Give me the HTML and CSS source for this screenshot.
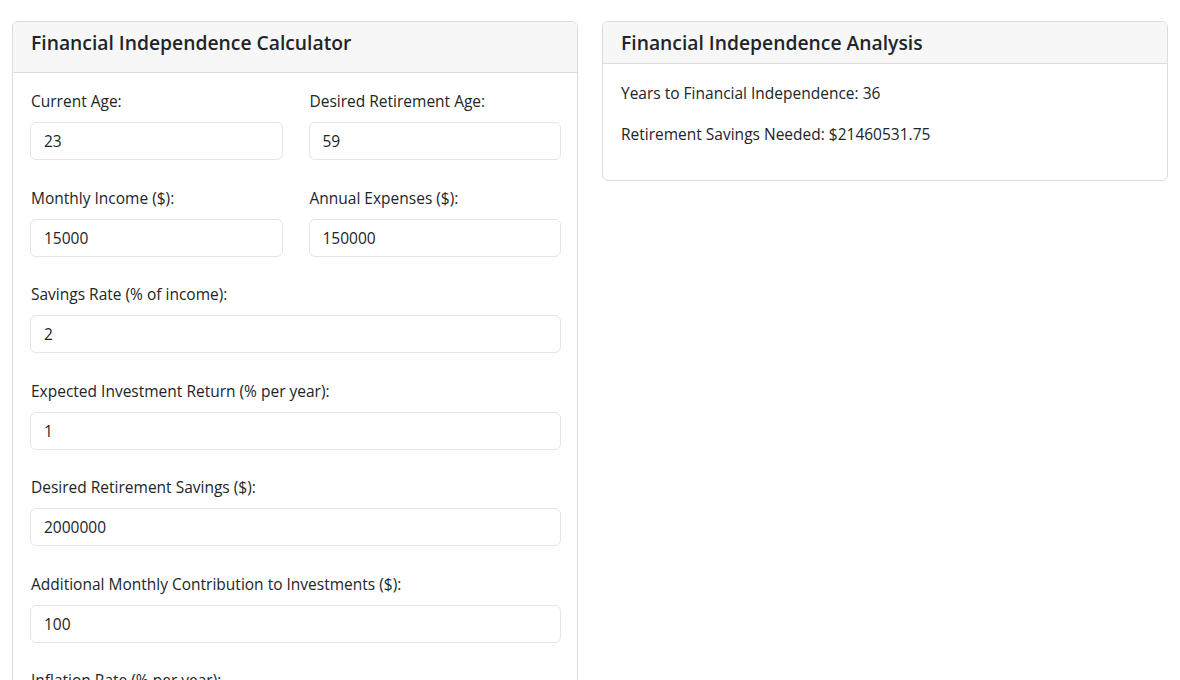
FILE: index.html
```html
<!DOCTYPE html>
<html lang="en">
<head>
  <meta charset="UTF-8">
  <meta name="viewport" content="width=device-width, initial-scale=1.0">
  <title>Financial Independence Calculator</title>
  <link rel="stylesheet" href="styles.css">
</head>
<body>
  <div class="page">
    <div class="card">
      <div class="card-header calc-header">
        <h5>Financial Independence Calculator</h5>
      </div>
      <div class="card-body">
        <div class="form-row">
          <div class="form-group">
            <label for="current-age">Current Age:</label>
            <input id="current-age" class="form-control" type="text" value="23">
          </div>
          <div class="form-group">
            <label for="retire-age">Desired Retirement Age:</label>
            <input id="retire-age" class="form-control" type="text" value="59">
          </div>
        </div>
        <div class="form-row">
          <div class="form-group">
            <label for="income">Monthly Income ($):</label>
            <input id="income" class="form-control" type="text" value="15000">
          </div>
          <div class="form-group">
            <label for="expenses">Annual Expenses ($):</label>
            <input id="expenses" class="form-control" type="text" value="150000">
          </div>
        </div>
        <div class="form-group">
          <label for="savings-rate">Savings Rate (% of income):</label>
          <input id="savings-rate" class="form-control" type="text" value="2">
        </div>
        <div class="form-group">
          <label for="return">Expected Investment Return (% per year):</label>
          <input id="return" class="form-control" type="text" value="1">
        </div>
        <div class="form-group">
          <label for="target">Desired Retirement Savings ($):</label>
          <input id="target" class="form-control" type="text" value="2000000">
        </div>
        <div class="form-group">
          <label for="contribution">Additional Monthly Contribution to Investments ($):</label>
          <input id="contribution" class="form-control" type="text" value="100">
        </div>
        <div class="form-group">
          <label for="inflation">Inflation Rate (% per year):</label>
          <input id="inflation" class="form-control" type="text" value="3">
        </div>
      </div>
    </div>

    <div class="card">
      <div class="card-header">
        <h5>Financial Independence Analysis</h5>
      </div>
      <div class="card-body result-body">
        <p>Years to Financial Independence: 36</p>
        <p>Retirement Savings Needed: $21460531.75</p>
      </div>
    </div>
  </div>
</body>
</html>
```

FILE: styles.css
```css
body {
  margin: 0;
  font-family: 'Open Sans', 'Noto Sans', sans-serif;
  font-size: 15.5px;
  line-height: 24px;
  color: #212529;
  background: #fff;
}
.page {
  display: grid;
  grid-template-columns: 1fr 1fr;
  gap: 24px;
  align-items: start;
  padding: 21px 12px 0 12px;
}
.card {
  border: 1px solid #dcdcdc;
  border-radius: 6px;
  background: #fff;
  overflow: hidden;
}
.card-header {
  background: #f7f7f7;
  border-bottom: 1px solid #dcdcdc;
  padding: 9px 16px 8px 18px;
}
.card-header h5 {
  margin: 0;
  font-size: 19.3px;
  font-weight: 600;
  line-height: 24px;
}
.calc-header {
  padding-bottom: 17px;
}
.card-body {
  padding: 16px 16px 16px 17px;
}
.card-body label,
.card-body p {
  padding-left: 1px;
}
.result-body {
  padding-top: 17px;
  padding-bottom: 17px;
}
.card-body p {
  margin: 0 0 17px 0;
}
.form-row {
  display: grid;
  grid-template-columns: 1fr 1fr;
  gap: 26px;
}
.form-group {
  margin-bottom: 25.5px;
}
.form-group label {
  display: block;
  margin-bottom: 9px;
}
.form-control {
  display: block;
  width: 100%;
  box-sizing: border-box;
  height: 38px;
  padding: 6px 12px 6px 13px;
  font-family: inherit;
  font-size: 15.5px;
  line-height: 24px;
  color: #212529;
  background: #fff;
  border: 1px solid #e3e5e8;
  border-radius: 6px;
}
```
